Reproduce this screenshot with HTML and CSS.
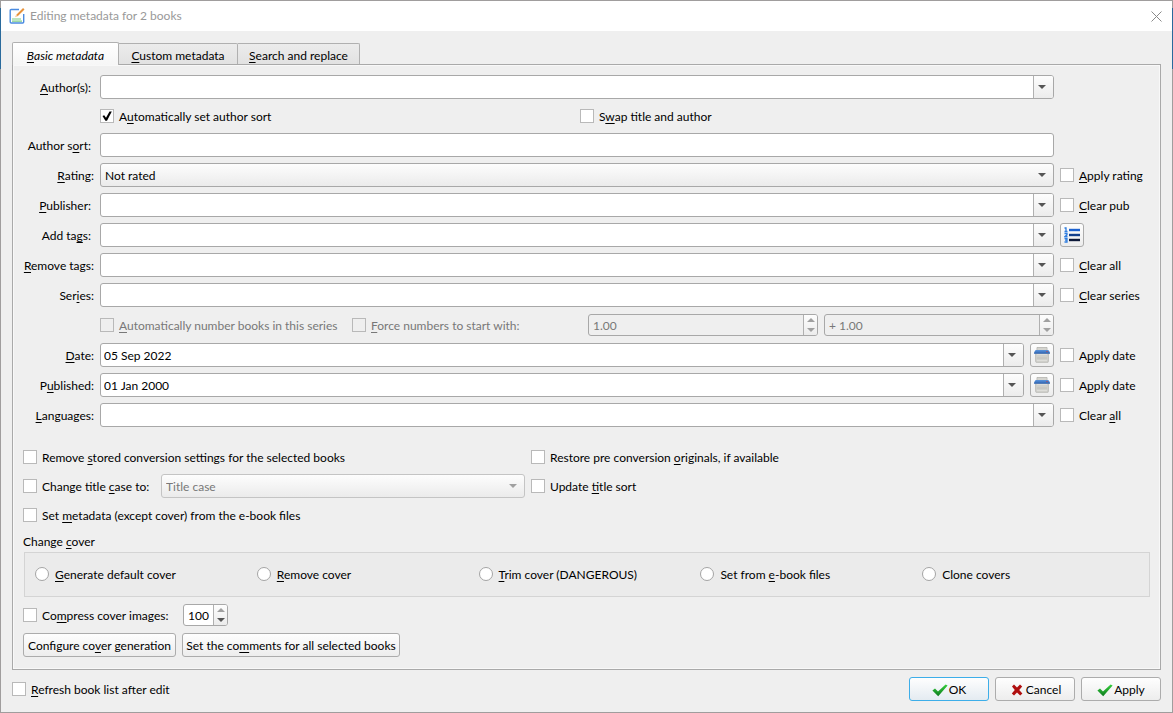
FILE: index.html
```html
<!DOCTYPE html>
<html lang="en">
<head>
  <meta charset="UTF-8" />
  <title>Editing metadata for 2 books</title>
  <meta name="viewport" content="width=device-width, initial-scale=1.0"/>
  <link rel="stylesheet" href="styles.css">
</head>

<body>
  <!-- Shared icons -->
  <svg class="sprite" aria-hidden="true">
    <defs>
      <linearGradient id="green" x1="0" y1="0" x2="0" y2="1">
        <stop offset="0" stop-color="#35d13c"/>
        <stop offset="1" stop-color="#0e7a1e"/>
      </linearGradient>
      <linearGradient id="blue" x1="0" y1="0" x2="0" y2="1">
        <stop offset="0" stop-color="#5b95dc"/>
        <stop offset="1" stop-color="#2b5fae"/>
      </linearGradient>
    </defs>
    <symbol id="icon-ok" viewBox="0 0 16 16">
      <path fill="url(#green)" d="M0.4 8.6 3 6.6 6 9.6 13.6 2.4 15.6 3.6 6.2 14.2z"/>
    </symbol>
    <symbol id="icon-cancel" viewBox="0 0 16 16">
      <path fill="#b00f0f" d="M3 4.6 5 2.6 8 5.4 11 2.6 13.2 4.4 10.2 8 13.4 11.4 11.2 13.4 8 10.6 5 13.4 2.8 11.6 5.8 8z"/>
    </symbol>
    <symbol id="icon-clear" viewBox="0 0 16 16">
      <path fill="#deded9" stroke="#adadaa" stroke-width=".8" d="M3 .4h10v4H3z"/>
      <path stroke="#bdbdba" stroke-width=".6" d="M4 2h8"/>
      <path fill="#cfcfca" stroke="#b0b0ac" stroke-width=".6" d="M1.500 6h13v8q0 1.600-1.600 1.600H3.100Q1.500 15.600 1.500 14z"/>
      <path fill="#dededa" d="M3 7h10v7H3z"/>
      <path stroke="#bcbcb7" stroke-width=".8" d="M4 8v5M6 8v5M8 8v5M10 8v5M12 8v5M3 11h10"/>
      <path fill="url(#blue)" d="M1.600 3h12.800L16 5.400v1.400H0V5.400z"/>
      <circle cx="13" cy="4.600" r=".7" fill="#d33a3a"/>
    </symbol>
  </svg>

  <main class="window">
    <!-- Title bar -->
    <header class="titlebar">
      <svg class="app-icon" viewBox="0 0 16 16" aria-hidden="true">
        <path fill="none" stroke="#4a8be0" stroke-width="1.400" d="M10 1.500H2.200q-1 0-1 1v11.500q0 1 1 1h11.500q1 0 1-1V6"/>
        <path stroke="#7ccb86" stroke-width="1.200" d="M3 11h9M3 13.200h10"/>
        <path stroke="#e8923a" stroke-width="2" d="M14.800.8 8 7.500"/>
        <path fill="#f6c48c" d="m8.600 8.200-1.500-1.400L6 9.300z"/>
      </svg>
      <h1>Editing metadata for 2 books</h1>
      <button class="close" type="button" aria-label="Close">
        <svg viewBox="0 0 11 11"><path stroke="#8a8a8a" fill="none" d="m.5.5 10 10M10.500.5l-10 10"/></svg>
      </button>
    </header>

    <form class="content">
      <div class="tabs" role="tablist">
        <button type="button" role="tab" class="tab tab-basic active" aria-selected="true"><u>B</u>asic metadata</button>
        <button type="button" role="tab" class="tab tab-custom" aria-selected="false"><u>C</u>ustom metadata</button>
        <button type="button" role="tab" class="tab tab-search" aria-selected="false"><u>S</u>earch and replace</button>
      </div>

      <div class="panel" role="tabpanel">
        <!-- Main fields -->
        <div class="fields">
          <label class="name inset" for="authors"><u>A</u>uthor(s):</label>
          <div class="combo"><input id="authors" type="text"><button type="button" class="drop" aria-label="Show authors"></button></div>
          <span></span>

          <span></span>
          <div class="author-options">
            <label class="check"><input type="checkbox" checked><span>A<u>u</u>tomatically set author sort</span></label>
            <label class="check"><input type="checkbox"><span>S<u>w</u>ap title and author</span></label>
          </div>
          <span></span>

          <label class="name inset" for="author-sort">Author s<u>o</u>rt:</label>
          <input class="line" id="author-sort" type="text">
          <span></span>

          <label class="name" for="rating"><u>R</u>ating:</label>
          <div class="select"><select id="rating"><option>Not rated</option></select></div>
          <label class="check"><input type="checkbox"><span><u>A</u>pply rating</span></label>

          <label class="name inset" for="publisher"><u>P</u>ublisher:</label>
          <div class="combo"><input id="publisher" type="text"><button type="button" class="drop" aria-label="Show publishers"></button></div>
          <label class="check"><input type="checkbox"><span><u>C</u>lear pub</span></label>

          <label class="name inset" for="add-tags">Add ta<u>g</u>s:</label>
          <div class="combo"><input id="add-tags" type="text"><button type="button" class="drop" aria-label="Show tags"></button></div>
          <button type="button" class="tool" aria-label="Open tag editor">
            <svg viewBox="0 0 16 16">
              <path fill="none" stroke="#2f7de0" stroke-width="1.300" d="M.5 1h1.500V4.500M.5 4.500h3M.5 6.500h2.500v1.300L1 9.500h2.500M.5 11.500h2.500v3.500H.5M1 13.200h2"/>
              <path stroke="#1c62d0" stroke-width="2.400" d="M5 3h11"/>
              <path stroke="#123f8c" stroke-width="2.400" d="M5 8h11"/>
              <path stroke="#0c1838" stroke-width="2.400" d="M5 13h11"/>
            </svg>
          </button>

          <label class="name" for="remove-tags"><u>R</u>emove tags:</label>
          <div class="combo"><input id="remove-tags" type="text"><button type="button" class="drop" aria-label="Show tags"></button></div>
          <label class="check"><input type="checkbox"><span><u>C</u>lear all</span></label>

          <label class="name" for="series">Ser<u>i</u>es:</label>
          <div class="combo"><input id="series" type="text"><button type="button" class="drop" aria-label="Show series"></button></div>
          <label class="check"><input type="checkbox"><span><u>C</u>lear series</span></label>

          <span></span>
          <div class="series-options">
            <label class="check disabled"><input type="checkbox" disabled><span><u>A</u>utomatically number books in this series</span></label>
            <label class="check disabled"><input type="checkbox" disabled><span><u>F</u>orce numbers to start with:</span></label>
            <div class="spin disabled">
              <input type="text" value="1.00" aria-label="Start number" disabled>
              <div class="steps"><button type="button" class="up" aria-label="Increase" disabled></button><button type="button" class="down" aria-label="Decrease" disabled></button></div>
            </div>
            <div class="spin disabled">
              <input type="text" value="+ 1.00" aria-label="Increment" disabled>
              <div class="steps"><button type="button" class="up" aria-label="Increase" disabled></button><button type="button" class="down" aria-label="Decrease" disabled></button></div>
            </div>
          </div>
          <span></span>

          <label class="name" for="date"><u>D</u>ate:</label>
          <div class="date-field">
            <div class="combo"><input id="date" type="text" value="05 Sep 2022"><button type="button" class="drop" aria-label="Open calendar"></button></div>
            <button type="button" class="tool" aria-label="Clear date"><svg><use href="#icon-clear"/></svg></button>
          </div>
          <label class="check"><input type="checkbox"><span>A<u>p</u>ply date</span></label>

          <label class="name" for="published">P<u>u</u>blished:</label>
          <div class="date-field">
            <div class="combo"><input id="published" type="text" value="01 Jan 2000"><button type="button" class="drop" aria-label="Open calendar"></button></div>
            <button type="button" class="tool" aria-label="Clear published date"><svg><use href="#icon-clear"/></svg></button>
          </div>
          <label class="check"><input type="checkbox"><span>A<u>p</u>ply date</span></label>

          <label class="name" for="languages"><u>L</u>anguages:</label>
          <div class="combo"><input id="languages" type="text"><button type="button" class="drop" aria-label="Show languages"></button></div>
          <label class="check"><input type="checkbox"><span>Clear <u>a</u>ll</span></label>
        </div>

        <!-- Extra options -->
        <div class="options">
          <label class="check"><input type="checkbox"><span>Remove <u>s</u>tored conversion settings for the selected books</span></label>
          <label class="check"><input type="checkbox"><span>Restore pre conversion <u>o</u>riginals, if available</span></label>
          <div class="title-case">
            <label class="check"><input type="checkbox"><span>Change title <u>c</u>ase to:</span></label>
            <div class="select disabled"><select aria-label="Title case" disabled><option>Title case</option></select></div>
          </div>
          <label class="check"><input type="checkbox"><span>Update <u>t</u>itle sort</span></label>
          <label class="check"><input type="checkbox"><span>Set <u>m</u>etadata (except cover) from the e-book files</span></label>
        </div>

        <!-- Cover -->
        <fieldset class="cover">
          <legend>Change <u>c</u>over</legend>
          <div class="cover-box">
            <label class="check"><input type="radio" name="cover"><span><u>G</u>enerate default cover</span></label>
            <label class="check"><input type="radio" name="cover"><span><u>R</u>emove cover</span></label>
            <label class="check"><input type="radio" name="cover"><span><u>T</u>rim cover (DANGEROUS)</span></label>
            <label class="check"><input type="radio" name="cover"><span>Set from <u>e</u>-book files</span></label>
            <label class="check"><input type="radio" name="cover"><span>Clone covers</span></label>
          </div>
        </fieldset>

        <div class="compress">
          <label class="check"><input type="checkbox"><span>Co<u>m</u>press cover images:</span></label>
          <div class="spin small">
            <input type="text" value="100" aria-label="Quality">
            <div class="steps"><button type="button" class="up" aria-label="Increase" disabled></button><button type="button" class="down" aria-label="Decrease"></button></div>
          </div>
        </div>

        <div class="actions">
          <button type="button" class="btn configure">Configure co<u>v</u>er generation</button>
          <button type="button" class="btn comments">Set the co<u>m</u>ments for all selected books</button>
        </div>
      </div>

      <!-- Dialog buttons -->
      <footer class="footer">
        <label class="check"><input type="checkbox"><span><u>R</u>efresh book list after edit</span></label>
        <button type="button" class="btn dialog default"><svg><use href="#icon-ok"/></svg>OK</button>
        <button type="button" class="btn dialog"><svg><use href="#icon-cancel"/></svg>Cancel</button>
        <button type="button" class="btn dialog"><svg><use href="#icon-ok"/></svg>Apply</button>
      </footer>
    </form>
  </main>
</body>
</html>
```
FILE: styles.css
```css
/* =============== BASE =============== */
* {
  box-sizing: border-box;
}
body {
  margin: 0;
  min-height: 100vh;
  padding: 1px;
  display: flex;
  background: linear-gradient(#a09d9d 8px, #2a6a9c 8px, #2a6a9c 69px, #a09d9d 69px);
  font-family: Lato, "Open Sans", sans-serif;
  font-size: 12px;
  line-height: 16px;
  color: #000;
}
input,
select,
button {
  font: inherit;
  color: inherit;
  margin: 0;
}
u {
  text-underline-offset: 2px;
  text-decoration-thickness: 1px;
  text-decoration-skip-ink: none;
}
.sprite {
  position: absolute;
  width: 0;
  height: 0;
}

/* =============== WINDOW =============== */
.window {
  flex: 1;
  min-width: 0;
  display: flex;
  flex-direction: column;
  background: #efefef;
}
.titlebar {
  display: flex;
  align-items: center;
  height: 30px;
  padding: 0 10px 0 8px;
  background: #fff;
}
.titlebar h1 {
  flex: 1;
  margin: 0 0 0 5px;
  font-size: 12px;
  font-weight: 400;
  color: #999;
}
.app-icon {
  width: 16px;
  height: 16px;
}
.close {
  display: flex;
  padding: 0;
  border: none;
  background: none;
}
.close svg {
  width: 11px;
  height: 11px;
}
.content {
  flex: 1;
  display: flex;
  flex-direction: column;
  padding: 11px 11px;
}

/* =============== TABS =============== */
.tabs {
  display: flex;
  align-items: flex-end;
}
.tab {
  height: 21px;
  padding: 3px 0 0;
  border: 1px solid #b0b0b0;
  border-left: none;
  border-bottom: none;
  border-radius: 0 2px 0 0;
  background: linear-gradient(#ececec, #e2e2e2);
}
.tab-basic {
  width: 107px;
}
.tab-custom {
  width: 119px;
}
.tab-search {
  width: 122px;
}
.tab.active {
  height: 23px;
  margin-bottom: -1px;
  border-left: 1px solid #b0b0b0;
  border-radius: 2px 2px 0 0;
  background: linear-gradient(#fff, #f6f6f6);
  font-style: italic;
  z-index: 1;
}
.panel {
  flex: 1;
  padding: 10px;
  border: 1px solid #a9a9a9;
  box-shadow: inset 0 0 0 1px #f8f8f8;
}

/* =============== FIELDS =============== */
.fields {
  display: grid;
  grid-template-columns: 71px minmax(0, 1fr) 90px;
  grid-template-rows: 24px 22px;
  grid-auto-rows: 24px;
  gap: 6px;
  align-items: center;
}
.name {
  padding-top: 2px;
  text-align: right;
  white-space: nowrap;
}
.name.inset {
  padding-right: 3px;
}
.author-options {
  display: grid;
  grid-template-columns: 1fr 1fr;
  gap: 6px;
}
.series-options {
  display: grid;
  grid-template-columns: minmax(0, 246fr) repeat(3, minmax(0, 230fr));
  gap: 6px;
  align-items: center;
}
.date-field {
  display: flex;
  gap: 6px;
}
.date-field .combo {
  flex: 1;
}

.line,
.combo,
.spin {
  height: 24px;
  border: 1px solid #a8a8a8;
  border-radius: 3px;
  background: #fff;
}
.combo,
.spin {
  display: flex;
  overflow: hidden;
}
.combo input,
.spin input {
  flex: 1;
  min-width: 0;
  padding: 2px 3px 0;
  border: none;
  background: none;
}
.drop {
  width: 20px;
  padding: 0 3px 0 0;
  border: none;
  border-left: 1px solid #b0b0b0;
  background: linear-gradient(#fdfdfd, #ececec);
}
.drop::before {
  content: "";
  display: block;
  width: 0;
  margin: 0 auto;
  border: 4px solid transparent;
  border-top-color: #555;
  border-bottom: none;
}

.select {
  position: relative;
}
.select select {
  display: block;
  width: 100%;
  height: 24px;
  padding: 2px 4px 0;
  border: 1px solid #a8a8a8;
  border-radius: 3px;
  appearance: none;
  background: linear-gradient(#fdfdfd, #ebebeb);
}
.select::after {
  content: "";
  position: absolute;
  right: 8px;
  top: 10px;
  border: 4px solid transparent;
  border-top-color: #555;
  border-bottom: none;
  pointer-events: none;
}
.select.disabled select {
  border-color: #c4c4c4;
  color: #787878;
  opacity: 1;
}
.select.disabled::after {
  border-top-color: #a0a0a0;
}

.spin {
  height: 22px;
}
.spin.disabled {
  background: #efefef;
  color: #787878;
}
.spin.disabled input,
.spin.small input {
  padding: 2px 0 0 4px;
}
.spin.small {
  width: 45px;
}
.steps {
  display: flex;
  flex-direction: column;
  width: 14px;
  border-left: 1px solid #b0b0b0;
  background: linear-gradient(#fdfdfd, #ececec);
}
.steps button {
  flex: 1;
  display: flex;
  justify-content: center;
  align-items: center;
  padding: 0;
  border: none;
  background: none;
}
.steps button::before {
  content: "";
  border: 4px solid transparent;
}
.steps .up::before {
  border-top: none;
  border-bottom-color: #555;
}
.steps .down::before {
  border-bottom: none;
  border-top-color: #555;
}
.steps .up:disabled::before {
  border-bottom-color: #a0a0a0;
}
.steps .down:disabled::before {
  border-top-color: #a0a0a0;
}

/* =============== CHECKS & RADIOS =============== */
.check {
  display: flex;
  align-items: center;
  gap: 5px;
  white-space: nowrap;
}
.check span {
  padding-top: 2px;
}
.check input {
  flex: none;
  display: grid;
  place-items: center;
  width: 14px;
  height: 14px;
  border: 1px solid #b9b9b9;
  appearance: none;
  background: #fff;
}
.check input[type="radio"] {
  border-color: #a4a4a4;
  border-radius: 50%;
}
.check input:checked::before {
  content: "";
  width: 10px;
  height: 10px;
  background: #000;
  clip-path: polygon(5% 50%, 22% 42%, 40% 68%, 75% 4%, 98% 4%, 50% 98%, 34% 98%);
}
.check.disabled {
  color: #787878;
}
.check.disabled input {
  background: #efefef;
}

/* =============== BUTTONS =============== */
.btn,
.tool {
  height: 24px;
  padding: 0;
  border: 1px solid #acacac;
  border-radius: 3px;
  background: linear-gradient(#fefefe, #ededed);
  white-space: nowrap;
}
.btn {
  padding-top: 2px;
}
.tool {
  display: flex;
  justify-content: center;
  align-items: center;
  width: 24px;
}
.tool svg,
.btn svg {
  width: 16px;
  height: 16px;
}

/* =============== OPTIONS =============== */
.options {
  display: grid;
  grid-template-columns: 502fr 619fr;
  grid-template-rows: 22px 24px 22px;
  gap: 6px;
  margin-top: 19px;
}
.title-case {
  display: flex;
  gap: 6px;
}
.title-case .check {
  width: 132px;
}
.title-case .select {
  flex: 1;
}

/* =============== COVER =============== */
.cover {
  min-width: 0;
  margin: 7px 0 0;
  padding: 0;
  border: none;
}
.cover legend {
  padding: 1px 0 0;
}
.cover-box {
  display: grid;
  grid-template-columns: repeat(5, 1fr);
  gap: 6px;
  align-items: center;
  height: 45px;
  margin: 2px 0 0 1px;
  padding: 0 11px 2px 10px;
  border: 1px solid #d4d4d4;
  background: #ebebeb;
}
.cover-box .check {
  gap: 6px;
}
.compress {
  display: flex;
  gap: 6px;
  margin-top: 7px;
}
.compress .check {
  width: 154px;
}
.actions {
  display: flex;
  gap: 6px;
  margin-top: 7px;
}
.configure {
  width: 153px;
}
.comments {
  width: 218px;
}

/* =============== FOOTER =============== */
.footer {
  display: flex;
  align-items: center;
  gap: 6px;
  margin-top: 7px;
}
.footer .check {
  flex: 1;
}
.dialog {
  display: flex;
  justify-content: center;
  align-items: center;
  gap: 1px;
  width: 80px;
}
.dialog.default {
  border-color: #3daee9;
  background: linear-gradient(#fefefe, #e4ebf1);
}
```
